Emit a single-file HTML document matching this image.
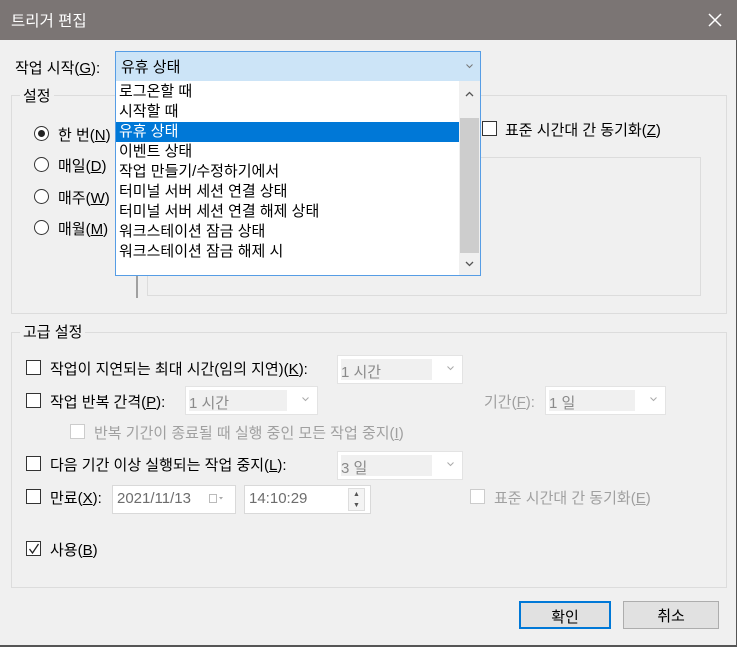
<!DOCTYPE html>
<html><head><meta charset="utf-8">
<style>
*{box-sizing:border-box;margin:0;padding:0}
body{width:737px;height:647px;background:#f0f0f0;position:relative;overflow:hidden;font-family:"Liberation Sans","Noto Sans CJK KR","NanumGothic",sans-serif;font-size:15px;color:#000}
.a{position:absolute;white-space:nowrap}
.title{left:0;top:0;width:737px;height:40px;background:#7b7574;color:#fff;font-size:15.5px;padding:9px 0 0 11px}
.grp{position:absolute;border:1px solid #dcdcdc}
.lbl{background:#f0f0f0;padding:0 3px}
.cb{position:absolute;width:15px;height:15px;border:1px solid #333;background:#fff}
.cb.dis{border-color:#ccc}
.rad{position:absolute;width:15px;height:15px;border:1px solid #333;border-radius:50%;background:#fff}
.dis{color:#a0a0a0}
.combo{position:absolute;border:1px solid #e3e3e3;background:#fff}
.combo .in{position:absolute;left:3px;top:3px;bottom:3px;right:30px;background:#f0f0f0;color:#8a8a8a;padding:2px 0 0 0}
.combo .ar{position:absolute;right:8px;top:10px}
.btn{position:absolute;height:28px;background:#e1e1e1;border:1px solid #adadad;text-align:center;padding-top:3px}
</style></head><body>
<div class="a title">트리거 편집</div>
<svg class="a" style="left:708px;top:13px" width="14" height="14"><path d="M1 1L13 13M13 1L1 13" stroke="#fff" stroke-width="1.5"/></svg>
<div class="a" style="right:0;top:40px;width:1px;height:607px;background:#555"></div>
<div class="a" style="left:0;top:645px;width:737px;height:2px;background:#555"></div>

<div class="a" style="left:15px;top:57px">작업 시작(<u>G</u>):</div>

<div class="grp" style="left:11px;top:95px;width:716px;height:219px"></div>
<div class="a lbl" style="left:20px;top:85px">설정</div>
<div class="rad" style="left:34px;top:126px"><div style="position:absolute;left:3px;top:3px;width:7px;height:7px;border-radius:50%;background:#222"></div></div>
<div class="a" style="left:58px;top:124px">한 번(<u>N</u>)</div>
<div class="rad" style="left:34px;top:157px"></div><div class="a" style="left:58px;top:155px">매일(<u>D</u>)</div>
<div class="rad" style="left:34px;top:189px"></div><div class="a" style="left:58px;top:187px">매주(<u>W</u>)</div>
<div class="rad" style="left:34px;top:220px"></div><div class="a" style="left:58px;top:218px">매월(<u>M</u>)</div>
<div class="a" style="left:136px;top:270px;width:2px;height:28px;background:#a0a0a0"></div>
<div class="grp" style="left:147px;top:157px;width:554px;height:139px"></div>
<div class="cb" style="left:482px;top:121px"></div>
<div class="a" style="left:505px;top:119px">표준 시간대 간 동기화(<u>Z</u>)</div>

<!-- dropdown -->
<div class="a" style="left:115px;top:51px;width:366px;height:31px;background:#cce4f7;border:1px solid #569de5"></div>
<div class="a" style="left:121px;top:56px">유휴 상태</div>
<svg class="a" style="left:466px;top:64px" width="7" height="5"><path d="M0.5 0.5L3.5 3.5L6.5 0.5" stroke="#777" fill="none"/></svg>
<div class="a" style="left:115px;top:81px;width:366px;height:195px;background:#fff;border:1px solid #569de5;border-top:none"></div>
<div class="a" style="left:116px;top:122px;width:343px;height:20px;background:#0078d7"></div>
<div class="a" style="left:459px;top:81px;width:21px;height:194px;background:#f0f0f0"></div>
<div class="a" style="left:460px;top:118px;width:19px;height:135px;background:#cdcdcd"></div>
<svg class="a" style="left:465px;top:91px" width="9" height="6"><path d="M1 5L4.5 1.5L8 5" stroke="#555" stroke-width="1.3" fill="none"/></svg>
<svg class="a" style="left:465px;top:261px" width="9" height="6"><path d="M1 1L4.5 4.5L8 1" stroke="#555" stroke-width="1.3" fill="none"/></svg>
<div class="a" style="left:119px;top:82px;line-height:20px">로그온할 때<br>시작할 때<br><span style="color:#fff">유휴 상태</span><br>이벤트 상태<br>작업 만들기/수정하기에서<br>터미널 서버 세션 연결 상태<br>터미널 서버 세션 연결 해제 상태<br>워크스테이션 잠금 상태<br>워크스테이션 잠금 해제 시</div>

<!-- advanced -->
<div class="grp" style="left:11px;top:332px;width:716px;height:256px"></div>
<div class="a lbl" style="left:20px;top:321px">고급 설정</div>
<div class="cb" style="left:26px;top:360px"></div>
<div class="a" style="left:50px;top:358px">작업이 지연되는 최대 시간(임의 지연)(<u>K</u>):</div>
<div class="combo" style="left:337px;top:355px;width:126px;height:29px"><div class="in">1 시간</div><svg class="ar" width="7" height="5"><path d="M0.5 0.5L3.5 3.5L6.5 0.5" stroke="#aaa" fill="none"/></svg></div>
<div class="cb" style="left:26px;top:393px"></div>
<div class="a" style="left:50px;top:391px">작업 반복 간격(<u>P</u>):</div>
<div class="combo" style="left:185px;top:386px;width:133px;height:29px"><div class="in">1 시간</div><svg class="ar" width="7" height="5"><path d="M0.5 0.5L3.5 3.5L6.5 0.5" stroke="#aaa" fill="none"/></svg></div>
<div class="a dis" style="left:484px;top:391px">기간(<u>F</u>):</div>
<div class="combo" style="left:545px;top:386px;width:121px;height:29px"><div class="in">1 일</div><svg class="ar" width="7" height="5"><path d="M0.5 0.5L3.5 3.5L6.5 0.5" stroke="#aaa" fill="none"/></svg></div>
<div class="cb dis" style="left:70px;top:424px"></div>
<div class="a dis" style="left:94px;top:422px">반복 기간이 종료될 때 실행 중인 모든 작업 중지(<u>I</u>)</div>
<div class="cb" style="left:26px;top:456px"></div>
<div class="a" style="left:50px;top:454px">다음 기간 이상 실행되는 작업 중지(<u>L</u>):</div>
<div class="combo" style="left:337px;top:451px;width:126px;height:29px"><div class="in">3 일</div><svg class="ar" width="7" height="5"><path d="M0.5 0.5L3.5 3.5L6.5 0.5" stroke="#aaa" fill="none"/></svg></div>
<div class="cb" style="left:26px;top:489px"></div>
<div class="a" style="left:50px;top:487px">만료(<u>X</u>):</div>
<div class="a" style="left:112px;top:485px;width:124px;height:29px;background:#fff;border:1px solid #d9d9d9;color:#6d6d6d;padding:4px 0 0 4px">2021/11/13
<svg style="position:absolute;left:96px;top:8px" width="16" height="10"><rect x="0.5" y="0.5" width="7" height="8" fill="none" stroke="#bbb"/><path d="M10 3L12 5.5L14 3Z" fill="#aaa"/></svg></div>
<div class="a" style="left:244px;top:485px;width:127px;height:29px;background:#fff;border:1px solid #d9d9d9;color:#6d6d6d;padding:4px 0 0 4px">14:10:29
<div style="position:absolute;right:5px;top:2px;width:17px;height:23px;border:1px solid #ddd;background:#f4f4f4;font-size:7px;color:#555;text-align:center;line-height:11px">▲<br>▼</div></div>
<div class="cb dis" style="left:470px;top:489px"></div>
<div class="a dis" style="left:494px;top:487px">표준 시간대 간 동기화(<u>E</u>)</div>
<div class="cb" style="left:26px;top:541px"><svg style="position:absolute;left:1px;top:1px" width="12" height="12"><path d="M1.5 6L4.5 10L10.5 1" stroke="#222" stroke-width="1.3" fill="none"/></svg></div>
<div class="a" style="left:50px;top:539px">사용(<u>B</u>)</div>

<div class="btn" style="left:519px;top:601px;width:92px;border:2px solid #0078d7">확인</div>
<div class="btn" style="left:623px;top:601px;width:96px">취소</div>
</body></html>
